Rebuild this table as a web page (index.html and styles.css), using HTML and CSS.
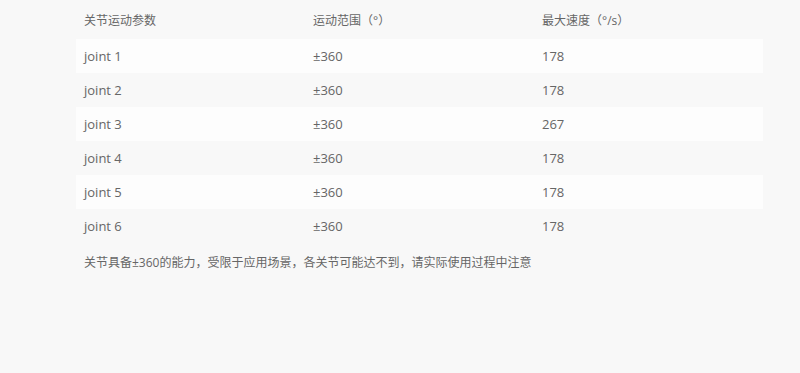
FILE: index.html
```html
<!DOCTYPE html>
<html lang="zh">
<head>
<meta charset="utf-8">
<link rel="stylesheet" href="styles.css">
</head>
<body>
<div class="wrap">
  <table class="spec">
    <thead>
      <tr><th>关节运动参数</th><th>运动范围（°）</th><th>最大速度（°/s）</th></tr>
    </thead>
    <tbody>
      <tr><td>joint 1</td><td>±360</td><td>178</td></tr>
      <tr><td>joint 2</td><td>±360</td><td>178</td></tr>
      <tr><td>joint 3</td><td>±360</td><td>267</td></tr>
      <tr><td>joint 4</td><td>±360</td><td>178</td></tr>
      <tr><td>joint 5</td><td>±360</td><td>178</td></tr>
      <tr><td>joint 6</td><td>±360</td><td>178</td></tr>
    </tbody>
  </table>
  <p class="note">关节具备±360的能力，受限于应用场景，各关节可能达不到，请实际使用过程中注意</p>
</div>
</body>
</html>
```
FILE: styles.css
```css
html, body {
  margin: 0;
  padding: 0;
  background: #f8f8f8;
}
body {
  font-family: "Open Sans", "Noto Sans CJK SC", sans-serif;
  font-size: 13px;
  color: #666;
}
.wrap {
  padding-left: 76px;
  width: 687px;
}
.spec {
  width: 687px;
  border-collapse: collapse;
  table-layout: fixed;
}
.spec th, .spec td {
  text-align: left;
  font-weight: normal;
  padding: 0 8px;
}
.spec th {
  height: 39px;
  font-size: 12px;
}
.spec td {
  height: 34px;
}
.spec tbody tr:nth-child(odd) {
  background: #fdfdfd;
}
.note {
  margin: 10px 0 0 8px;
  line-height: 20px;
  font-size: 12px;
}
```
